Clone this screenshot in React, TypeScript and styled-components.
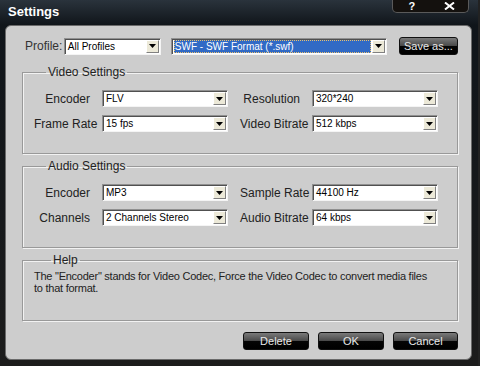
import React from 'react';
import styled, { createGlobalStyle } from 'styled-components';

const GlobalStyle = createGlobalStyle`
  html, body {
    margin: 0;
    padding: 0;
    background: #111;
  }
  body {
    font-family: "Liberation Sans", Arial, sans-serif;
  }
`;

interface ComboProps {
    value: string;
    width: number;
    selected?: boolean;
}

const Combo: React.FC<ComboProps> = ({ value, width, selected }) => (
    <ComboBox style={{ width }}>
        <ComboText $selected={selected}>{value}</ComboText>
        <ComboArrow>
            <svg width="7" height="4" viewBox="0 0 7 4">
                <path d="M0 0h7L3.5 4z" fill="#000" />
            </svg>
        </ComboArrow>
    </ComboBox>
);

interface FieldRow {
    label: string;
    value: string;
}

const videoRows: FieldRow[][] = [
    [{ label: 'Encoder', value: 'FLV' }, { label: 'Resolution', value: '320*240' }],
    [{ label: 'Frame Rate', value: '15 fps' }, { label: 'Video Bitrate', value: '512 kbps' }],
];

const audioRows: FieldRow[][] = [
    [{ label: 'Encoder', value: 'MP3' }, { label: 'Sample Rate', value: '44100 Hz' }],
    [{ label: 'Channels', value: '2 Channels Stereo' }, { label: 'Audio Bitrate', value: '64 kbps' }],
];

const SettingsGroup: React.FC<{ title: string; rows: FieldRow[][] }> = ({ title, rows }) => (
    <Group>
        <GroupTitle>{title}</GroupTitle>
        <FieldGrid>
            {rows.flat().map(f => (
                <React.Fragment key={f.label}>
                    <FieldLabel>{f.label}</FieldLabel>
                    <Combo value={f.value} width={126} />
                </React.Fragment>
            ))}
        </FieldGrid>
    </Group>
);

const App: React.FC = () => {
    return (
        <>
            <GlobalStyle />
            <Window>
                <TitleBar>
                    <Title>Settings</Title>
                    <TitleButtons>
                        <TitleButton>?</TitleButton>
                        <TitleButton>
                            <svg width="11" height="8" viewBox="0 0 11 8">
                                <path d="M1 0.5l9 7M10 0.5l-9 7" stroke="#fff" strokeWidth="2" />
                            </svg>
                        </TitleButton>
                    </TitleButtons>
                </TitleBar>

                <Panel>
                    <ProfileRow>
                        <ProfileLabel>Profile:</ProfileLabel>
                        <Combo value="All Profiles" width={97} />
                        <Combo value="SWF - SWF Format (*.swf)" width={216} selected />
                        <DarkButton $width={61}>Save as...</DarkButton>
                    </ProfileRow>

                    <SettingsGroup title="Video Settings" rows={videoRows} />
                    <SettingsGroup title="Audio Settings" rows={audioRows} />

                    <HelpGroup>
                        <HelpTitle>Help</HelpTitle>
                        <HelpText>
                            The "Encoder" stands for Video Codec, Force the Video Codec to convert media files
                            <br />
                            to that format.
                        </HelpText>
                    </HelpGroup>

                    <ButtonRow>
                        <DarkButton $width={66}>Delete</DarkButton>
                        <DarkButton $width={66}>OK</DarkButton>
                        <DarkButton $width={65}>Cancel</DarkButton>
                    </ButtonRow>
                </Panel>
            </Window>
        </>
    );
};

// Styled Components
const Window = styled.div`
  width: 480px;
  height: 366px;
  box-sizing: border-box;
  display: flex;
  flex-direction: column;
  background: linear-gradient(180deg, #2a333c 0px, #10151a 25px, #1c1c1c 100%);
  border-right: 2px solid #222;
  padding: 0 6px 6px 5px;
  overflow: hidden;
`;

const TitleBar = styled.div`
  height: 25px;
  display: flex;
  justify-content: space-between;
  align-items: flex-start;
  margin: 0 2px 0 -5px;
  padding-left: 8px;
`;

const Title = styled.div`
  color: #fff;
  font-weight: bold;
  font-size: 13px;
  line-height: 24px;
`;

const TitleButtons = styled.div`
  display: flex;
  height: 13px;
  width: 77px;
  box-sizing: border-box;
  background: #14110e;
  border: 1px solid #5a5a5a;
  border-top: none;
  border-radius: 0 0 5px 5px;
  margin-right: 1px;
`;

const TitleButton = styled.div`
  flex: 1;
  display: flex;
  align-items: center;
  justify-content: center;
  color: #fff;
  font-weight: bold;
  font-size: 11px;
  line-height: 12px;
`;

const Panel = styled.div`
  flex: 1;
  background: #cdcdcd;
  border: 1px solid #6a6a6a;
  border-radius: 6px;
  padding: 11px 13px 0 16px;
  display: flex;
  flex-direction: column;
  color: #222;
`;

const ProfileRow = styled.div`
  display: flex;
  align-items: center;
  height: 18px;
  padding-left: 3px;
`;

const ProfileLabel = styled.span`
  font-size: 12px;
  width: 40px;
  color: #333;
`;

const ComboBox = styled.div`
  height: 17px;
  box-sizing: border-box;
  display: flex;
  background: #fff;
  border: 1px solid;
  border-color: #909090 #f4f4f4 #f4f4f4 #909090;
  box-shadow: inset 1px 1px 0 #505050;
  padding: 1px 1px 1px 2px;
  margin-right: 10px;
  flex-shrink: 0;
`;

const ComboText = styled.div<{ $selected?: boolean }>`
  flex: 1;
  font-size: 10px;
  line-height: 13px;
  padding-left: 1px;
  white-space: nowrap;
  overflow: hidden;
  color: ${p => (p.$selected ? '#fff' : '#000')};
  background: ${p => (p.$selected ? '#316ac5' : 'transparent')};
  outline: ${p => (p.$selected ? '1px dotted #e8c070' : 'none')};
  outline-offset: -1px;
`;

const ComboArrow = styled.div`
  width: 13px;
  display: flex;
  align-items: center;
  justify-content: center;
  background: #ece9d8;
  border: 1px solid;
  border-color: #fff #808080 #808080 #fff;
  box-sizing: border-box;
  margin-left: 1px;
`;

const DarkButton = styled.button<{ $width: number }>`
  width: ${p => p.$width}px;
  height: 18px;
  padding: 0;
  border: 1px solid #111;
  border-radius: 3px;
  background: linear-gradient(180deg, #7a7a7a 0%, #4a4a4a 48%, #050505 52%, #000 100%);
  color: #e8e8e8;
  font-family: "Liberation Sans", Arial, sans-serif;
  font-size: 11px;
  line-height: 16px;
  cursor: pointer;
  margin-left: 2px;
`;

const Group = styled.fieldset`
  margin: 10px 0 0;
  padding: 11px 19px 21px 11px;
  border: 1px solid #999;
  box-shadow: 1px 1px 0 #f2f2f2, inset 1px 1px 0 #f2f2f2;
  width: 436px;
  box-sizing: border-box;
  & + & {
    margin-top: 5px;
  }
`;

const GroupTitle = styled.legend`
  font-size: 12px;
  color: #222;
  margin-left: 12px;
  padding: 0 2px;
`;

const FieldGrid = styled.div`
  display: grid;
  grid-template-columns: 56px 126px 60px 126px;
  column-gap: 12px;
  row-gap: 8px;
  align-items: center;
`;

const FieldLabel = styled.span`
  font-size: 12px;
  text-align: right;
  white-space: nowrap;
  color: #222;
  & + div {
    margin-right: 0;
  }
`;

const HelpGroup = styled(Group)`
  margin-top: 3px;
  padding: 3px 10px 0 11px;
  height: 68px;
`;

const HelpTitle = styled(GroupTitle)`
  margin-left: 17px;
`;

const HelpText = styled.p`
  margin: 0;
  font-size: 11px;
  line-height: 12px;
  letter-spacing: -0.25px;
  white-space: nowrap;
  color: #222;
`;

const ButtonRow = styled.div`
  display: flex;
  justify-content: flex-end;
  gap: 7px;
  margin-top: 11px;
`;

export default App;
